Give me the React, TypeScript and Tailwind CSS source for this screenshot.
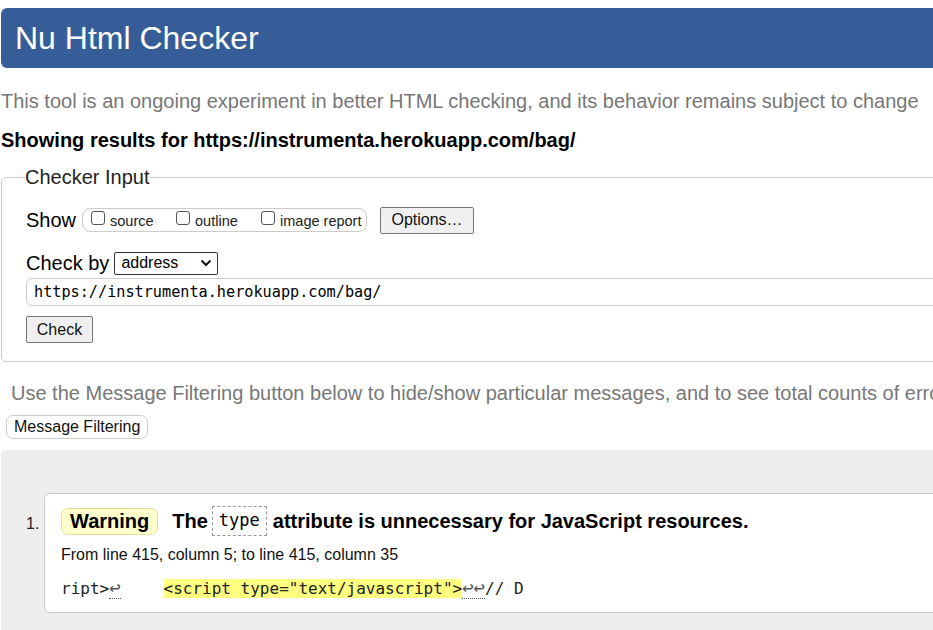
export default function App() {
  const sans = { fontFamily: '"Liberation Sans", Arial, sans-serif' }
  const mono = '[font-family:"DejaVu_Sans_Mono",monospace]'

  return (
    <div className="w-[933px] h-[630px] overflow-hidden bg-white text-black" style={sans}>
      <div className="w-[1200px] pl-[1px]">
        {/* header */}
        <div className="mt-[8px] h-[60px] bg-[#365d98] rounded-l-[6px] flex items-center pl-[14px]">
          <h1 className="text-[32px] text-white leading-none">Nu Html Checker</h1>
        </div>

        <p className="mt-[21px] h-[24px] text-[20px] leading-[24px] text-[#777]">
          This tool is an ongoing experiment in better HTML checking, and its behavior remains subject to change
        </p>
        <p className="mt-[15px] h-[24px] text-[20px] leading-[24px] font-bold">
          Showing results for https://instrumenta.herokuapp.com/bag/
        </p>

        {/* checker input */}
        <fieldset className="mt-[13px] border border-[#ccc] rounded-[5px] h-[197px] px-[24px]">
          <legend className="text-[20px] leading-[24px] px-[0px] -ml-[1px] text-[#222]">Checker Input</legend>

          <div className="mt-[17px] flex items-center h-[28px]">
            <span className="text-[20px]">Show</span>
            <div className="ml-[6px] h-[24px] w-[285px] border border-[#ccc] rounded-[8px] flex items-center pl-[8px] text-[14.5px] text-[#222]">
              <span className="inline-block w-[14px] h-[14px] border border-[#555] rounded-[3px] -mt-[5px]" />
              <span className="ml-[5px] w-[66px] mt-[3px]">source</span>
              <span className="inline-block w-[14px] h-[14px] border border-[#555] rounded-[3px] -mt-[5px]" />
              <span className="ml-[5px] w-[66px] mt-[3px]">outline</span>
              <span className="inline-block w-[14px] h-[14px] border border-[#555] rounded-[3px] -mt-[5px]" />
              <span className="ml-[5px] mt-[3px]">image report</span>
            </div>
            <button className="ml-[13px] h-[27px] w-[94px] bg-[#efefef] border border-[#767676] rounded-[2px] text-[16px] text-[#111]">
              Options…
            </button>
          </div>

          <div className="mt-[17px] flex items-center h-[24px]">
            <span className="text-[20px]">Check by</span>
            <div className="ml-[5px] h-[23px] w-[104px] border border-[#333] rounded-[2px] flex items-center justify-between pl-[6px] pr-[5px] text-[16px]">
              <span>address</span>
              <svg width="12" height="8" viewBox="0 0 12 8" fill="none" stroke="#111" strokeWidth="2">
                <path d="M1.5 1.5 6 6l4.5-4.5" />
              </svg>
            </div>
          </div>

          <div className={`mt-[3px] h-[28px] border border-[#ccc] rounded-[6px] flex items-center pl-[7px] text-[15.2px] ${mono}`}>
            https://instrumenta.herokuapp.com/bag/
          </div>

          <button className="mt-[10px] h-[27px] w-[67px] bg-[#efefef] border border-[#767676] rounded-[2px] text-[16px] text-[#111]">
            Check
          </button>
        </fieldset>

        <p className="mt-[19px] pl-[10px] text-[20px] leading-[24px] text-[#777] whitespace-nowrap">
          Use the Message Filtering button below to hide/show particular messages, and to see total counts of errors and warnings.
        </p>
        <button className="mt-[10px] ml-[5px] h-[24px] px-[7px] border border-[#ccc] rounded-[7px] bg-white text-[16px] text-[#111] leading-none">
          Message Filtering
        </button>

        {/* results */}
        <div className="mt-[11px] h-[200px] bg-[#eee] rounded-tl-[4px] pt-[43px] pl-[43px]">
          <div className="relative h-[120px] bg-white border border-[#ccc] rounded-l-[6px] pl-[16px] pt-[12px]">
            <span className="absolute left-[-19px] top-[18px] text-[16px] text-[#222]">1.</span>
            <div className="flex items-center h-[30px]">
              <span className="h-[27px] px-[8px] bg-[#ffffcc] border border-[#e4dfa3] rounded-[7px] text-[20px] font-bold leading-[25px]">
                Warning
              </span>
              <span className="ml-[14px] text-[20px] font-bold">The</span>
              <span className={`ml-[4px] h-[30px] px-[6px] border border-dashed border-[#999] flex items-center text-[17px] ${mono}`}>
                type
              </span>
              <span className="ml-[6px] text-[20px] font-bold">attribute is unnecessary for JavaScript resources.</span>
            </div>
            <p className="mt-[9px] text-[16px] text-[#111] leading-[20px]">From line 415, column 5; to line 415, column 35</p>
            <p className={`mt-[13px] text-[16px] leading-[20px] whitespace-pre text-[#222] ${mono}`}>
              ript&gt;<span className="border-b border-dotted border-[#555] text-[#555] text-[19px] leading-[18px]">↩</span>{'   '}
              <span className="ml-[14px] bg-[#ffff80]">&lt;script type="text/javascript"&gt;</span>
              <span className="border-b border-dotted border-[#555] text-[#555] text-[19px] leading-[18px]">↩↩</span>// D
            </p>
          </div>
        </div>
      </div>
    </div>
  )
}
